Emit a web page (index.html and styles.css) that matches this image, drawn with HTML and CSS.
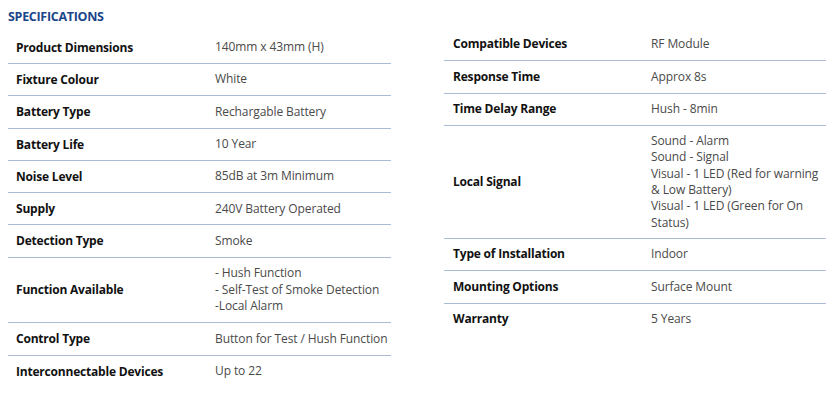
FILE: index.html
```html
<!DOCTYPE html>
<html lang="en">
<head>
<meta charset="utf-8">
<title>Specifications</title>
<link rel="stylesheet" href="styles.css">
</head>
<body>
<div class="page">
  <h2 class="title">SPECIFICATIONS</h2>
  <div class="specs">
    <div class="col col--left">
      <div class="row"><div class="label">Product Dimensions</div><div class="value">140mm x 43mm (H)</div></div>
      <div class="row"><div class="label">Fixture Colour</div><div class="value">White</div></div>
      <div class="row"><div class="label">Battery Type</div><div class="value">Rechargable Battery</div></div>
      <div class="row"><div class="label">Battery Life</div><div class="value">10 Year</div></div>
      <div class="row"><div class="label">Noise Level</div><div class="value">85dB at 3m Minimum</div></div>
      <div class="row"><div class="label">Supply</div><div class="value">240V Battery Operated</div></div>
      <div class="row"><div class="label">Detection Type</div><div class="value">Smoke</div></div>
      <div class="row row--tall"><div class="label">Function Available</div><div class="value">- Hush Function<br>- Self-Test of Smoke Detection<br>-Local Alarm</div></div>
      <div class="row"><div class="label">Control Type</div><div class="value">Button for Test / Hush Function</div></div>
      <div class="row row--last"><div class="label">Interconnectable Devices</div><div class="value">Up to 22</div></div>
    </div>
    <div class="col col--right">
      <div class="row"><div class="label">Compatible Devices</div><div class="value">RF Module</div></div>
      <div class="row"><div class="label">Response Time</div><div class="value">Approx 8s</div></div>
      <div class="row"><div class="label">Time Delay Range</div><div class="value">Hush - 8min</div></div>
      <div class="row"><div class="label">Local Signal</div><div class="value">Sound - Alarm<br>Sound - Signal<br>Visual - 1 LED (Red for warning &amp; Low Battery)<br>Visual - 1 LED (Green for On Status)</div></div>
      <div class="row"><div class="label">Type of Installation</div><div class="value">Indoor</div></div>
      <div class="row"><div class="label">Mounting Options</div><div class="value">Surface Mount</div></div>
      <div class="row row--last"><div class="label">Warranty</div><div class="value">5 Years</div></div>
    </div>
  </div>
</div>
</body>
</html>
```
FILE: styles.css
```css
* { box-sizing: border-box; }
html, body { margin: 0; padding: 0; background: #fff; }
body {
  font-family: "Open Sans", "Noto Sans", sans-serif;
  color: #111;
}
.page {
  padding: 9px 0 0 8px;
  width: 835px;
}
.title {
  margin: 0;
  font-size: 12.5px;
  line-height: 16px;
  font-weight: 700;
  color: #1b468a;
  letter-spacing: -0.3px;
}
.specs {
  display: grid;
  grid-template-columns: 383px 382px;
  column-gap: 53px;
  align-items: start;
  margin-top: 6.7px;
}
.col--right { margin-top: -3px; }
.row {
  display: grid;
  grid-template-columns: 207px 1fr;
  align-items: center;
  padding: 6px 0;
  border-bottom: 1.5px solid #a9bbd5;
}
.col--left .label { line-height: 19.3px; }
.col--right .row { padding: 6.4px 0; }
.row--tall { padding: 7.7px 0; }
.row--last { border-bottom: none; }
.label {
  padding-left: 8px;
  font-size: 12px;
  font-weight: 700;
  line-height: 18.8px;
  letter-spacing: -0.2px;
  color: #111;
}
.col--right .label { padding-left: 9px; }
.value {
  font-size: 12px;
  line-height: 16.4px;
  color: #4a4a4a;
  letter-spacing: -0.1px;
}
```
